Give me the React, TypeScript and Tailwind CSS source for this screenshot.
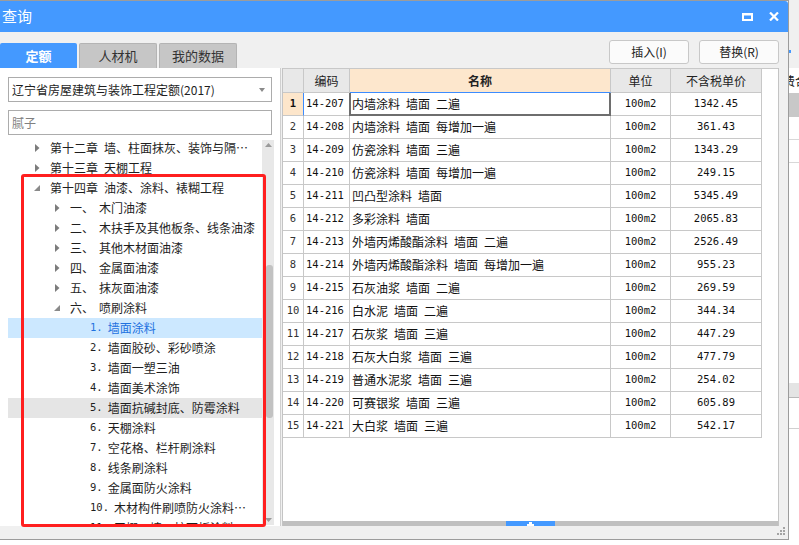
import { clsx } from "clsx"

type Row = [string, string, string, string]

const rows: Row[] = [
  ["14-207", "内墙涂料 墙面 二遍", "100m2", "1342.45"],
  ["14-208", "内墙涂料 墙面 每增加一遍", "100m2", "361.43"],
  ["14-209", "仿瓷涂料 墙面 三遍", "100m2", "1343.29"],
  ["14-210", "仿瓷涂料 墙面 每增加一遍", "100m2", "249.15"],
  ["14-211", "凹凸型涂料 墙面", "100m2", "5345.49"],
  ["14-212", "多彩涂料 墙面", "100m2", "2065.83"],
  ["14-213", "外墙丙烯酸酯涂料 墙面 二遍", "100m2", "2526.49"],
  ["14-214", "外墙丙烯酸酯涂料 墙面 每增加一遍", "100m2", "955.23"],
  ["14-215", "石灰油浆 墙面 二遍", "100m2", "269.59"],
  ["14-216", "白水泥 墙面 二遍", "100m2", "344.34"],
  ["14-217", "石灰浆 墙面 三遍", "100m2", "447.29"],
  ["14-218", "石灰大白浆 墙面 三遍", "100m2", "477.79"],
  ["14-219", "普通水泥浆 墙面 三遍", "100m2", "254.02"],
  ["14-220", "可赛银浆 墙面 三遍", "100m2", "605.89"],
  ["14-221", "大白浆 墙面 三遍", "100m2", "542.17"],
]

type Node = {
  level: 0 | 1 | 2
  kind: "closed" | "open" | "leaf"
  num?: string
  label: string
  selected?: boolean
  hover?: boolean
}

const tree: Node[] = [
  { level: 0, kind: "closed", label: "第十二章\u2002墙、柱面抹灰、装饰与隔…" },
  { level: 0, kind: "closed", label: "第十三章\u2002天棚工程" },
  { level: 0, kind: "open", label: "第十四章\u2002油漆、涂料、裱糊工程" },
  { level: 1, kind: "closed", num: "一、", label: "木门油漆" },
  { level: 1, kind: "closed", num: "二、", label: "木扶手及其他板条、线条油漆" },
  { level: 1, kind: "closed", num: "三、", label: "其他木材面油漆" },
  { level: 1, kind: "closed", num: "四、", label: "金属面油漆" },
  { level: 1, kind: "closed", num: "五、", label: "抹灰面油漆" },
  { level: 1, kind: "open", num: "六、", label: "喷刷涂料" },
  { level: 2, kind: "leaf", num: "1.", label: "墙面涂料", selected: true },
  { level: 2, kind: "leaf", num: "2.", label: "墙面胶砂、彩砂喷涂" },
  { level: 2, kind: "leaf", num: "3.", label: "墙面一塑三油" },
  { level: 2, kind: "leaf", num: "4.", label: "墙面美术涂饰" },
  { level: 2, kind: "leaf", num: "5.", label: "墙面抗碱封底、防霉涂料", hover: true },
  { level: 2, kind: "leaf", num: "6.", label: "天棚涂料" },
  { level: 2, kind: "leaf", num: "7.", label: "空花格、栏杆刷涂料" },
  { level: 2, kind: "leaf", num: "8.", label: "线条刷涂料" },
  { level: 2, kind: "leaf", num: "9.", label: "金属面防火涂料" },
  { level: 2, kind: "leaf", num: "10.", label: "木材构件刷喷防火涂料…" },
  { level: 2, kind: "leaf", num: "11.", label: "天棚、墙、柱面板涂料" },
]

const indent = ["pl-[22px]", "pl-[42px]", "pl-[62px]"]

function Arrow({ kind }: { kind: Node["kind"] }) {
  if (kind === "leaf") return <span className="w-[14px]" />
  return (
    <span className="flex w-[14px] justify-center">
      {kind === "closed" ? (
        <svg width="5" height="8" viewBox="0 0 5 8">
          <path d="M0 0 L4.5 4 L0 8 Z" fill="#7c7c7c" />
        </svg>
      ) : (
        <svg width="6" height="6" viewBox="0 0 6 6">
          <path d="M6 0 L6 6 L0 6 Z" fill="#8a8a8a" />
        </svg>
      )}
    </span>
  )
}

function TreeRow({ n }: { n: Node }) {
  return (
    <div
      className={clsx(
        "flex h-[20px] shrink-0 items-center whitespace-nowrap text-[12px] text-[#1e1e1e]",
        indent[n.level],
        n.selected && "bg-[#cce8ff] text-[#1f72e0]",
        n.hover && "bg-[#e5e5e5]"
      )}
    >
      <Arrow kind={n.kind} />
      <span className="ml-[6px] flex items-center">
        {n.level === 1 && <span className="w-[29px]">{n.num}</span>}
        {n.level === 2 && (
          <span className="mr-[5px] font-['DejaVu_Sans_Mono',monospace] text-[10.5px]">{n.num}</span>
        )}
        {n.label}
      </span>
    </div>
  )
}

function LeftPanel() {
  return (
    <div className="flex w-[281px] flex-col border-r border-[#d0d0d0] bg-white">
      <div className="mx-[8px] mt-[9px] flex h-[25px] items-center justify-between border border-[#acacac] bg-white pl-[3px] pr-[6px] text-[12px] text-[#1e1e1e]">
        <span>辽宁省房屋建筑与装饰工程定额(2017)</span>
        <svg width="6" height="4" viewBox="0 0 6 4">
          <path d="M0 0 H6 L3 4 Z" fill="#8a8a8a" />
        </svg>
      </div>
      <div className="mx-[8px] mt-[8px] flex h-[25px] items-center border border-[#acacac] bg-white pl-[3px] text-[12px] text-[#808080]">
        腻子
      </div>
      <div className="mt-[3px] flex h-[387px]">
        <div className="ml-[8px] flex w-[254px] flex-col overflow-hidden">
          {tree.map((n, i) => (
            <TreeRow key={i} n={n} />
          ))}
        </div>
        <div className="mt-[2px] flex h-[385px] w-[12px] flex-col items-center bg-[#e8e8e8]">
          <svg className="mt-[3px]" width="7" height="4" viewBox="0 0 7 4">
            <path d="M0 4 L3.5 0 L7 4 Z" fill="#9a9a9a" />
          </svg>
          <div className="ml-[3px] mt-[118px] h-[153px] w-[7px] rounded-[3px] bg-[#c2c2c2]" />
          <svg className="mt-auto mb-[3px]" width="7" height="4" viewBox="0 0 7 4">
            <path d="M0 0 L7 0 L3.5 4 Z" fill="#9a9a9a" />
          </svg>
        </div>
      </div>
    </div>
  )
}

function RightPanel() {
  return (
    <div className="flex w-[497px] flex-col border-x border-[#c4c4c4] bg-white">
      <div className="flex flex-col">
        <div className="flex h-[25px] border-t border-[#c8c8c8] text-[12px] text-[#222]">
          <div className="w-[21px] border-b border-r border-[#c8c8c8] bg-[#e8e8e8]" />
          <div className="flex w-[46px] items-center justify-center border-b border-r border-[#c8c8c8] bg-[#e8e8e8]">编码</div>
          <div className="flex w-[261px] items-center justify-center border-b border-r border-[#c8c8c8] border-b-[#3c8cff] bg-[#fde7cd] font-bold">名称</div>
          <div className="flex w-[60px] items-center justify-center border-b border-r border-[#c8c8c8] bg-[#e8e8e8]">单位</div>
          <div className="flex w-[91px] items-center justify-center border-b border-r border-[#c8c8c8] bg-[#e8e8e8]">不含税单价</div>
        </div>
        {rows.map((r, i) => (
          <div key={i} className="flex h-[23px] text-[12px] text-[#111]">
            <div
              className={clsx(
                "flex w-[21px] items-center justify-center border-b border-r border-[#c8c8c8] font-['DejaVu_Sans_Mono',monospace] text-[10.5px]",
                i === 0 ? "border-r-[#3c8cff] bg-[#fde6cb] font-bold" : "text-[#333]"
              )}
            >
              {i + 1}
            </div>
            <div className="flex w-[46px] items-center border-b border-r border-[#c8c8c8] pl-[2px] font-['DejaVu_Sans_Mono',monospace] text-[10.5px]">
              {r[0]}
            </div>
            <div className="relative flex w-[261px] items-center whitespace-nowrap border-b border-r border-[#c8c8c8] pl-[2px]">
              {r[1].split(" ").join("\u2002")}
              {i === 0 && (
                <div className="absolute -bottom-[1px] -left-[1px] -right-[1px] top-0 border-2 border-t-0 border-[#6e6e6e]" />
              )}
            </div>
            <div className="flex w-[60px] items-center justify-center border-b border-r border-[#c8c8c8] font-['DejaVu_Sans_Mono',monospace] text-[10.5px]">
              {r[2]}
            </div>
            <div className="flex w-[91px] items-center justify-center border-b border-r border-[#c8c8c8] font-['DejaVu_Sans_Mono',monospace] text-[10.5px]">
              {r[3]}
            </div>
          </div>
        ))}
      </div>
      <div className="flex-1" />
      <div className="flex h-[5px] justify-center bg-[#c0c0c0]">
        <div className="flex w-[49px] items-center justify-center bg-[#4499ff]">
          <svg width="7" height="4" viewBox="0 0 7 4">
            <path d="M2 0 H5 V2 H7 V4 H0 V2 H2 Z" fill="#ffffff" />
          </svg>
        </div>
      </div>
    </div>
  )
}

function BackgroundStrip() {
  return (
    <div className="flex flex-1 flex-col overflow-hidden bg-white">
      <div className="flex h-[68px] flex-col bg-[#f0f0f0]">
        <div className="mt-[50px] h-[3px] w-[2px] bg-[#4499ff]" />
      </div>
      <div className="-ml-[6px] flex h-[25px] items-center whitespace-nowrap text-[12px] text-[#222]">费合计</div>
      <div className="h-[24px] bg-[#c8c8c8]" />
      <div className="h-[23px] border-b border-[#d8d8d8]" />
      <div className="h-[23px] border-b border-[#d8d8d8]" />
      <div className="h-[220px]" />
      <div className="h-[15px] border-b border-[#b8b8b8] bg-[#e4e4e4]" />
      <div className="h-[31px] border-b border-[#d0d0d0]" />
    </div>
  )
}

export default function App() {
  return (
    <div className="relative flex h-[545px] w-[799px] overflow-hidden bg-white font-['Noto_Sans_CJK_SC','Liberation_Sans',sans-serif]">
      <div className="flex h-[540px] w-[789px] flex-col border-b border-r border-t border-[#9c9c9c] bg-[#f0f0f0]">
        {/* title bar */}
        <div className="flex h-[31px] items-center justify-between rounded-tr-[3px] bg-[#4499ff] pl-[2px] pr-[9px] text-white">
          <span className="text-[15px]">查询</span>
          <div className="flex items-center gap-[16px]">
            <svg width="11" height="8" viewBox="0 0 11 8">
              <rect x="1" y="1" width="9" height="6" fill="none" stroke="#ffffff" strokeWidth="2" />
              <rect x="0" y="0" width="11" height="2.5" fill="#ffffff" />
            </svg>
            <svg width="10" height="9" viewBox="0 0 10 9">
              <path d="M1 0.5 L9 8.5 M9 0.5 L1 8.5" stroke="#ffffff" strokeWidth="2.2" />
            </svg>
          </div>
        </div>
        {/* tabs + actions */}
        <div className="flex h-[36px] justify-between pr-[9px]">
          <div className="flex items-end">
            <div className="flex h-[25px] w-[77px] items-center justify-center rounded-t-[2px] bg-[#4499ff] text-[13px] font-bold text-white">
              定额
            </div>
            <div className="ml-[2px] flex h-[25px] w-[78px] items-center justify-center rounded-t-[2px] border border-b-0 border-[#b4b4b4] bg-[#c6c6c6] text-[13px] text-[#333]">
              人材机
            </div>
            <div className="ml-[2px] flex h-[25px] w-[78px] items-center justify-center rounded-t-[2px] border border-b-0 border-[#b4b4b4] bg-[#c6c6c6] text-[13px] text-[#333]">
              我的数据
            </div>
          </div>
          <div className="mt-[8px] flex gap-[10px]">
            <button className="h-[24px] w-[80px] rounded-[3px] border border-[#c8c8c8] bg-[#fbfbfb] text-[12px] text-[#222]">
              插入(I)
            </button>
            <button className="h-[24px] w-[80px] rounded-[3px] border border-[#c8c8c8] bg-[#fbfbfb] text-[12px] text-[#222]">
              替换(R)
            </button>
          </div>
        </div>
        {/* body */}
        <div className="flex h-[458px]">
          <LeftPanel />
          <div className="w-[1px]" />
          <RightPanel />
        </div>
        {/* bottom strip */}
        <div className="flex h-[13px] justify-end pr-[2px] pt-[1px]">
          <svg width="9" height="9" viewBox="0 0 9 9">
            <rect x="6" y="0" width="2" height="2" fill="#a4a4a4" />
            <rect x="3" y="3" width="2" height="2" fill="#a4a4a4" />
            <rect x="6" y="3" width="2" height="2" fill="#a4a4a4" />
            <rect x="0" y="6" width="2" height="2" fill="#a4a4a4" />
            <rect x="3" y="6" width="2" height="2" fill="#a4a4a4" />
            <rect x="6" y="6" width="2" height="2" fill="#a4a4a4" />
          </svg>
        </div>
      </div>
      <BackgroundStrip />
      {/* annotation box */}
      <div className="pointer-events-none absolute left-[21px] top-[174px] h-[353px] w-[245px] rounded-[3px] border-[3px] border-[#ff1f1f]" />
    </div>
  )
}
